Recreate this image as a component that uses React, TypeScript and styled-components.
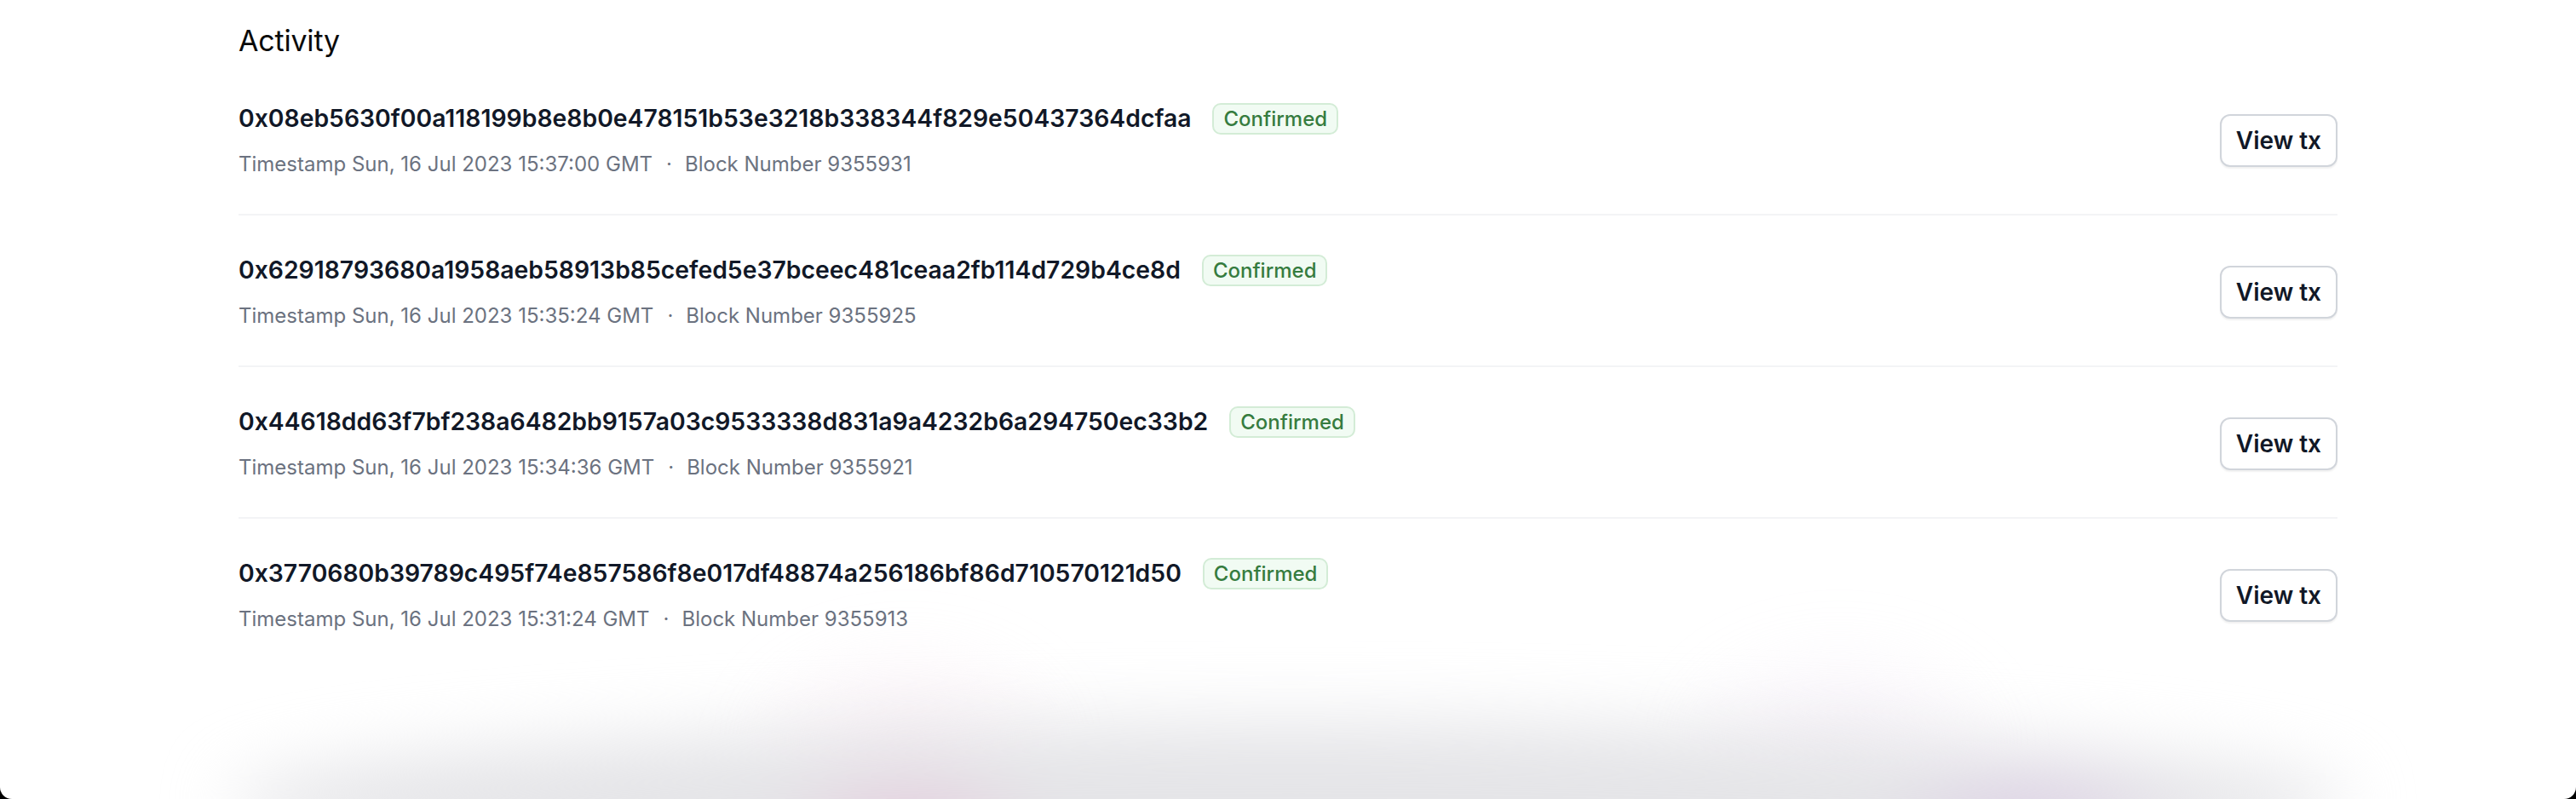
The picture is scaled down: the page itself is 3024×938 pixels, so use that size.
import React from "react";
import styled, { createGlobalStyle } from "styled-components";

const Global = createGlobalStyle`
  html, body { margin: 0; padding: 0; background: #000; }
  body { font-family: Inter, "Noto Sans", "Liberation Sans", sans-serif; -webkit-font-smoothing: antialiased; }
  * { box-sizing: border-box; }
`;

const Page = styled.div`
  position: relative;
  width: 3024px;
  height: 938px;
  background: #ffffff;
  border-radius: 0 0 14px 14px;
  overflow: hidden;
`;

const Glow = styled.div`
  position: absolute;
  left: 270px;
  right: 270px;
  bottom: -100px;
  height: 190px;
  background:
    radial-gradient(ellipse 240px 130px at 32% 70%, rgba(228, 192, 216, 0.8), transparent 70%),
    radial-gradient(ellipse 280px 130px at 85% 70%, rgba(214, 194, 226, 0.8), transparent 70%),
    linear-gradient(#e5e5e8, #e5e5e8);
  filter: blur(40px);
  border-radius: 50%;
  pointer-events: none;
`;

const Haze = styled.div`
  position: absolute;
  left: 700px;
  right: 500px;
  bottom: 10px;
  height: 360px;
  background:
    radial-gradient(ellipse 300px 200px at 20% 85%, rgba(244, 224, 236, 0.4), transparent 70%),
    radial-gradient(ellipse 300px 200px at 80% 85%, rgba(238, 226, 242, 0.4), transparent 70%);
  filter: blur(30px);
  pointer-events: none;
`;

const Container = styled.div`
  position: relative;
  z-index: 1;
  width: 2464px;
  margin: 0 auto;
  padding-top: 26px;
`;

const Title = styled.h2`
  margin: 0;
  font-size: 34px;
  line-height: 44px;
  font-weight: 400;
  color: #0a0a0a;
  letter-spacing: -0.2px;
`;

const List = styled.ul`
  list-style: none;
  margin: 5px 0 0;
  padding: 0;
`;

const Row = styled.li<{ $first?: boolean }>`
  display: flex;
  align-items: center;
  justify-content: space-between;
  padding: 44px 0 41px;
  border-top: ${(p) => (p.$first ? "none" : "2px solid #f3f4f6")};
`;

const Info = styled.div`
  display: flex;
  flex-direction: column;
  gap: 15px;
`;

const HashLine = styled.div`
  display: flex;
  align-items: center;
  gap: 25px;
  height: 40px;
`;

const Hash = styled.span`
  font-size: 28.35px;
  font-weight: 600;
  color: #111827;
`;

const Badge = styled.span`
  display: inline-flex;
  align-items: center;
  height: 37px;
  padding: 0 11px;
  border: 2px solid #d3ecd6;
  border-radius: 10px;
  background: #f1fbf3;
  color: #367c3f;
  font-size: 24px;
  font-weight: 500;
`;

const Meta = styled.div`
  display: flex;
  align-items: center;
  height: 36px;
  font-size: 24px;
  color: #6b7280;
  font-weight: 400;
`;

const Dot = styled.span`
  margin: 0 15px 0 16px;
`;

const Button = styled.button`
  height: 62px;
  padding: 0 17px;
  border: 2px solid #d1d5db;
  border-radius: 12px;
  background: #fff;
  box-shadow: 0 2px 2px rgba(0, 0, 0, 0.06);
  font-family: inherit;
  font-size: 28px;
  font-weight: 600;
  color: #111827;
  cursor: pointer;
`;

const txs = [
  {
    hash: "0x08eb5630f00a118199b8e8b0e478151b53e3218b338344f829e50437364dcfaa",
    time: "Sun, 16 Jul 2023 15:37:00 GMT",
    block: "9355931",
  },
  {
    hash: "0x62918793680a1958aeb58913b85cefed5e37bceec481ceaa2fb114d729b4ce8d",
    time: "Sun, 16 Jul 2023 15:35:24 GMT",
    block: "9355925",
  },
  {
    hash: "0x44618dd63f7bf238a6482bb9157a03c9533338d831a9a4232b6a294750ec33b2",
    time: "Sun, 16 Jul 2023 15:34:36 GMT",
    block: "9355921",
  },
  {
    hash: "0x3770680b39789c495f74e857586f8e017df48874a256186bf86d710570121d50",
    time: "Sun, 16 Jul 2023 15:31:24 GMT",
    block: "9355913",
  },
];

export default function App() {
  return (
    <Page>
      <Global />
      <Haze />
      <Glow />
      <Container>
        <Title>Activity</Title>
        <List>
          {txs.map((t, i) => (
            <Row key={t.hash} $first={i === 0}>
              <Info>
                <HashLine>
                  <Hash>{t.hash}</Hash>
                  <Badge>Confirmed</Badge>
                </HashLine>
                <Meta>
                  Timestamp {t.time}
                  <Dot>·</Dot>
                  Block Number {t.block}
                </Meta>
              </Info>
              <Button>View tx</Button>
            </Row>
          ))}
        </List>
      </Container>
    </Page>
  );
}
